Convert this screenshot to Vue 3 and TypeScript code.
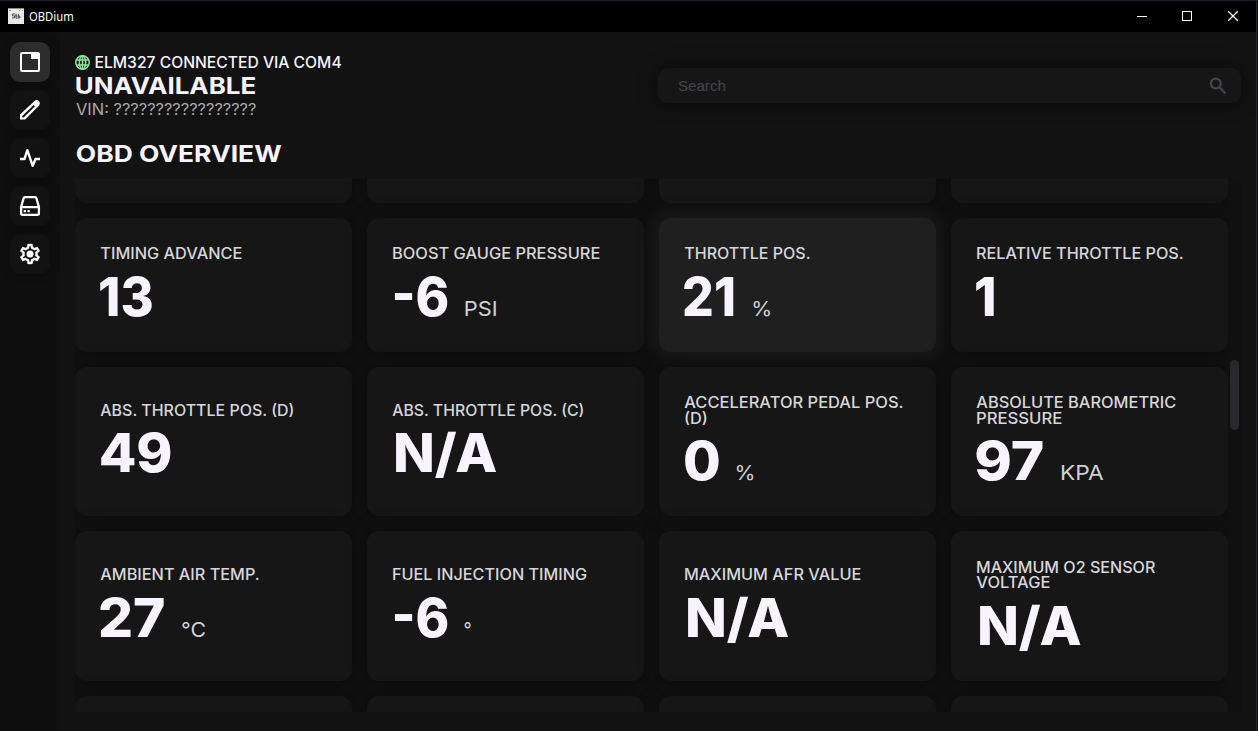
<script setup lang="ts">
import type { Directive } from 'vue'

/* Left inset and width, in pixels, that the visible part of a text takes up. */
type Span = [number, number]
interface Line { text: string; span: Span }
interface Sensor { label: Line[]; value: Line; unit?: Line; active?: boolean }

const l = (text: string, left: number, width: number): Line => ({ text, span: [left, width] })

const vSpan: Directive<HTMLElement, Span> = {
  mounted(el, { value: [left, width] }) {
    const cs = getComputedStyle(el)
    const ctx = document.createElement('canvas').getContext('2d')
    if (!ctx) return
    ctx.font = `${cs.fontWeight} ${cs.fontSize} ${cs.fontFamily}`
    const m = ctx.measureText(el.textContent ?? '')
    const scale = width / (m.actualBoundingBoxRight + m.actualBoundingBoxLeft)
    el.style.transform = `translateX(${left + m.actualBoundingBoxLeft * scale}px) scaleX(${scale})`
  },
}

const sensors: Sensor[] = [
  { label: [l('TIMING ADVANCE', 0.3, 141.7)], value: l('13', 0, 52) },
  { label: [l('BOOST GAUGE PRESSURE', 1, 207)], value: l('-6', 2.3, 53), unit: l('PSI', 72.8, 31.2) },
  { label: [l('THROTTLE POS.', 0.3, 125.5)], value: l('21', 0, 49.7), unit: l('%', 69.3, 16.7), active: true },
  { label: [l('RELATIVE THROTTLE POS.', 1, 206)], value: l('1', 0, 18.3) },
  { label: [l('ABS. THROTTLE POS. (D)', 0.3, 193.7)], value: l('49', 0.7, 69.8) },
  { label: [l('ABS. THROTTLE POS. (C)', 0.3, 191.7)], value: l('N/A', 4, 100.5) },
  { label: [l('ACCELERATOR PEDAL POS.', 0.3, 218.5), l('(D)', 1, 22)], value: l('0', 1, 34), unit: l('%', 52.5, 16.7) },
  { label: [l('ABSOLUTE BAROMETRIC', 0.3, 199.5), l('PRESSURE', 1, 85)], value: l('97', 0.3, 66.7), unit: l('KPA', 85, 42.5) },
  { label: [l('AMBIENT AIR TEMP.', 0.3, 158.7)], value: l('27', 0, 64.2), unit: l('°C', 82, 23) },
  { label: [l('FUEL INJECTION TIMING', 1, 193.5)], value: l('-6', 2.3, 53), unit: l('°', 72.3, 7) },
  { label: [l('MAXIMUM AFR VALUE', 1, 176)], value: l('N/A', 4, 100.5) },
  { label: [l('MAXIMUM O2 SENSOR', 1, 178.3), l('VOLTAGE', 0.3, 73.7)], value: l('N/A', 4, 100.8) },
]
const edge = [0, 1, 2, 3]
</script>

<template>
  <div class="window">
    <header class="titlebar">
      <svg class="app-icon" width="16" height="16" viewBox="0 0 16 16">
        <rect width="16" height="16" fill="#e9e9e9" />
        <path d="M0 .5h16M1 2.5h2m8 0h1m2 0h1" stroke="#8c8c8c" />
        <path d="M6.8 5.9H4.6v2h2v2H4M8 5.5v4.7h1.6M10.3 6v4h1.5V8h-1.5M7.4 7.6l2 .6" fill="none" stroke="#3a3a3a" stroke-width=".9" />
      </svg>
      <span class="app-name"><span v-span="[0, 44.5]" class="fit">OBDium</span></span>
      <div class="controls">
        <svg width="46" height="30" viewBox="0 0 46 30"><path d="M14 15.5h10" /></svg>
        <svg width="46" height="30" viewBox="0 0 46 30"><rect x="13.5" y="10.5" width="9" height="9" /></svg>
        <svg width="46" height="30" viewBox="0 0 46 30"><path d="m13.2 10.2 9.6 9.6m0-9.6-9.6 9.6" /></svg>
      </div>
    </header>

    <div class="body">
      <nav class="sidebar">
        <button class="nav active">
          <svg viewBox="0 0 24 24"><path d="M4 2h16a2 2 0 0 1 2 2v16a2 2 0 0 1-2 2H4a2 2 0 0 1-2-2V4a2 2 0 0 1 2-2Zm0 2v16h16V9h-7V4Z" fill-rule="evenodd" /></svg>
        </button>
        <button class="nav">
          <svg viewBox="0 0 24 24"><path d="m16.500 2.900.2-.2a3.300 3.300 0 0 1 4.600 4.600L7.200 21.600H2v-5.200Zm-.9 4L4.300 18.100v1.300H5.700L17 8.200Z" fill-rule="evenodd" /></svg>
        </button>
        <button class="nav">
          <svg viewBox="0 0 24 24"><path d="M2 13h4.500L9.300 4.200l5.400 15.600L17.500 13H22" fill="none" stroke="#fff" stroke-width="2.400" stroke-linejoin="round" /></svg>
        </button>
        <button class="nav">
          <svg viewBox="0 0 24 24">
            <path d="M3.100 13 5.500 4.500Q5.900 3.200 7 3.200h10q1.100 0 1.500 1.300L20.900 13v6.300q0 1.600-1.600 1.600H4.700q-1.600 0-1.600-1.600ZM3 13.200h18" fill="none" stroke="#fff" stroke-width="2.300" />
            <path d="M5.700 15.900h2.300V18.200H5.700zm3.800 0h2.300V18.200H9.500z" />
          </svg>
        </button>
        <button class="nav">
          <svg viewBox="0 0 24 24">
            <path stroke="#fff" stroke-width=".35" d="M19.43 12.98c.04-.32.07-.64.07-.98 0-.34-.03-.66-.07-.98l2.11-1.65c.19-.15.24-.42.12-.64l-2-3.46c-.09-.16-.26-.25-.44-.25-.06 0-.12.01-.17.03l-2.49 1c-.52-.4-1.08-.73-1.69-.98l-.38-2.65C14.46 2.18 14.25 2 14 2h-4c-.25 0-.46.18-.49.42l-.38 2.65c-.61.25-1.17.59-1.69.98l-2.49-1c-.06-.02-.12-.03-.18-.03-.17 0-.34.09-.43.25l-2 3.46c-.13.22-.07.49.12.64l2.11 1.65c-.04.32-.07.65-.07.98 0 .33.03.66.07.98l-2.11 1.65c-.19.15-.24.42-.12.64l2 3.46c.09.16.26.25.44.25.06 0 .12-.01.17-.03l2.49-1c.52.4 1.08.73 1.69.98l.38 2.65c.03.24.24.42.49.42h4c.25 0 .46-.18.49-.42l.38-2.65c.61-.25 1.17-.59 1.69-.98l2.49 1c.06.02.12.03.18.03.17 0 .34-.09.43-.25l2-3.46c.12-.22.07-.49-.12-.64l-2.11-1.65zm-1.98-1.71c.04.31.05.52.05.73 0 .21-.02.43-.05.73l-.14 1.13.89.7 1.08.84-.7 1.21-1.27-.51-1.04-.42-.9.68c-.43.32-.84.56-1.25.73l-1.06.43-.16 1.13-.2 1.35h-1.4l-.19-1.35-.16-1.13-1.06-.43c-.43-.18-.83-.41-1.23-.71l-.91-.7-1.06.43-1.27.51-.7-1.21 1.08-.84.89-.7-.14-1.13c-.03-.31-.05-.54-.05-.74s.02-.43.05-.73l.14-1.13-.89-.7-1.08-.84.7-1.21 1.27.51 1.04.42.9-.68c.43-.32.84-.56 1.25-.73l1.06-.43.16-1.13.2-1.35h1.39l.19 1.35.16 1.13 1.06.43c.43.18.83.41 1.23.71l.91.7 1.06-.43 1.27-.51.7 1.21-1.07.85-.89.7.14 1.13z" />
            <circle cx="12" cy="12" r="3.500" />
          </svg>
        </button>
      </nav>

      <main class="main">
        <section class="top">
          <div class="vehicle">
            <div class="status">
              <svg class="globe" viewBox="0 0 14 14"><g fill="none" stroke="#8fe39a" stroke-width="1.400"><circle cx="7" cy="7" r="6.300" /><ellipse cx="7" cy="7" rx="2.900" ry="6.300" /><path d="M7 .7v12.600M1.300 4.600h11.400M1.300 9.400h11.400" /></g></svg>
              <span v-span="[0.5, 246]" class="fit">ELM327 CONNECTED VIA COM4</span>
            </div>
            <div class="heading"><span v-span="[0.900, 179]" class="fit">UNAVAILABLE</span></div>
            <div class="vin"><span v-span="[1, 180.500]" class="fit">VIN: ?????????????????</span></div>
          </div>
          <div class="search">
            <span v-span="[0, 47.500]" class="fit">Search</span>
            <svg width="18" height="18" viewBox="0 0 18 18"><circle cx="6.800" cy="6.600" r="4.900" /><path d="m10.400 10.200 6 6" /></svg>
          </div>
        </section>
        <h1 class="heading title"><span v-span="[1.900, 204.500]" class="fit">OBD OVERVIEW</span></h1>

        <section class="scroller">
          <div class="grid">
            <article v-for="i in edge" :key="'a' + i" class="card" />
            <article v-for="(s, i) in sensors" :key="i" class="card" :class="{ active: s.active }">
              <div v-for="line in s.label" :key="line.text" class="label">
                <span v-span="line.span" class="fit">{{ line.text }}</span>
              </div>
              <div class="reading">
                <span class="value"><span v-span="s.value.span" class="fit">{{ s.value.text }}</span></span>
                <span v-if="s.unit" class="unit"><span v-span="s.unit.span" class="fit">{{ s.unit.text }}</span></span>
              </div>
            </article>
            <article v-for="i in edge" :key="'b' + i" class="card" />
          </div>
          <div class="track"><div class="thumb" /></div>
        </section>
      </main>
    </div>
  </div>
</template>

<style>
body { background: #131313; overflow: hidden; }
</style>

<style scoped>
* { box-sizing: border-box; }
.window {
  width: 1258px; height: 731px; display: flex; flex-direction: column;
  background: #121212; color: #f7f4ff; overflow: hidden;
  border-top: 1px solid #20202b; border-right: 1px solid #09090c;
  font-family: Inter, "Open Sans", sans-serif;
}
.fit { display: inline-block; white-space: pre; transform-origin: 0 50%; }
.titlebar { height: 31px; flex: none; display: flex; align-items: center; background: #000; padding-left: 8px; border-right: 1px solid #292832; }
.app-icon { margin-top: -1px; }
.app-name { margin-left: 5px; font: 12px/30px "Noto Sans", sans-serif; color: #fff; flex: 1; }
.controls { display: flex; margin: -1px -5px 0 0; }
.controls svg { fill: none; stroke: #fff; stroke-width: 1; }
.controls svg:nth-child(-n+2) { shape-rendering: crispEdges; }
.controls svg:last-child { stroke-width: 1.300; }
.body { flex: 1; display: flex; min-height: 0; border-right: 1px solid #292832; }
.sidebar { width: 60px; flex: none; background: #0f0f0f; padding: 10px; display: flex; flex-direction: column; gap: 8px; }
.nav { width: 40px; height: 40px; padding: 8px; border: 0; border-radius: 10px; background: #121212; box-shadow: 0 0 10px rgba(0, 0, 0, .25); }
.nav.active { background: #2d2d2d; }
.nav svg { display: block; width: 24px; height: 24px; fill: #fff; }
.main { flex: 1; min-width: 0; padding: 21px 15px 19px; display: flex; flex-direction: column; }
.top { display: flex; justify-content: space-between; }
.vehicle { width: 300px; }
.status { display: flex; align-items: center; height: 18px; font-size: 15.500px; font-weight: 500; }
.globe { width: 15px; height: 15px; margin-right: 4.500px; }
.heading { margin: 0; font-size: 23.300px; font-weight: 700; line-height: 30px; height: 30px; }
.vin { font-size: 15.500px; line-height: 18px; height: 17px; color: #aaa8ad; }
.search { width: 583px; height: 35px; margin-top: 15px; padding: 0 14px 0 20px; border-radius: 10px; background: #161616; box-shadow: 0 0 20px rgba(0, 0, 0, .45); display: flex; align-items: center; justify-content: space-between; font: 15px/35px "Liberation Sans", Arial, sans-serif; color: #47454d; }
.search svg { fill: none; stroke: #47454d; stroke-width: 2.200; }
.title { margin-top: 21px; }
.scroller { margin-top: auto; height: 533px; flex: none; display: flex; overflow: hidden; }
.grid { margin-top: -126px; width: 1153px; flex: none; display: grid; grid-template-columns: repeat(4, 277px); grid-template-rows: 150px 134px 149px 150px 150px; gap: 15px; }
.card { border-radius: 12px; background: #161616; box-shadow: 0 0 20px rgba(0, 0, 0, .42); padding: 4px 25px 0; display: flex; flex-direction: column; justify-content: center; }
.card.active { background: #1f1f1f; box-shadow: 0 0 20px #1f1f1f; }
.label { height: 15.500px; line-height: 15.500px; margin-left: -.4px; font-size: 15.500px; font-weight: 500; color: #d6d7dc; white-space: nowrap; }
.reading { height: 66px; display: grid; line-height: 70px; align-items: baseline; white-space: nowrap; }
.value, .unit { grid-area: 1 / 1; }
.value { font-size: 53px; font-weight: 800; }
.unit { font-size: 20.500px; font-weight: 400; color: #d0d1d7; }
.track { flex: 1; background: #101010; border-radius: 0 0 7px 7px; padding: 181px 2px 0; position: relative; }
.thumb { width: 9px; height: 70px; border-radius: 5px; background: #29282d; }
</style>
